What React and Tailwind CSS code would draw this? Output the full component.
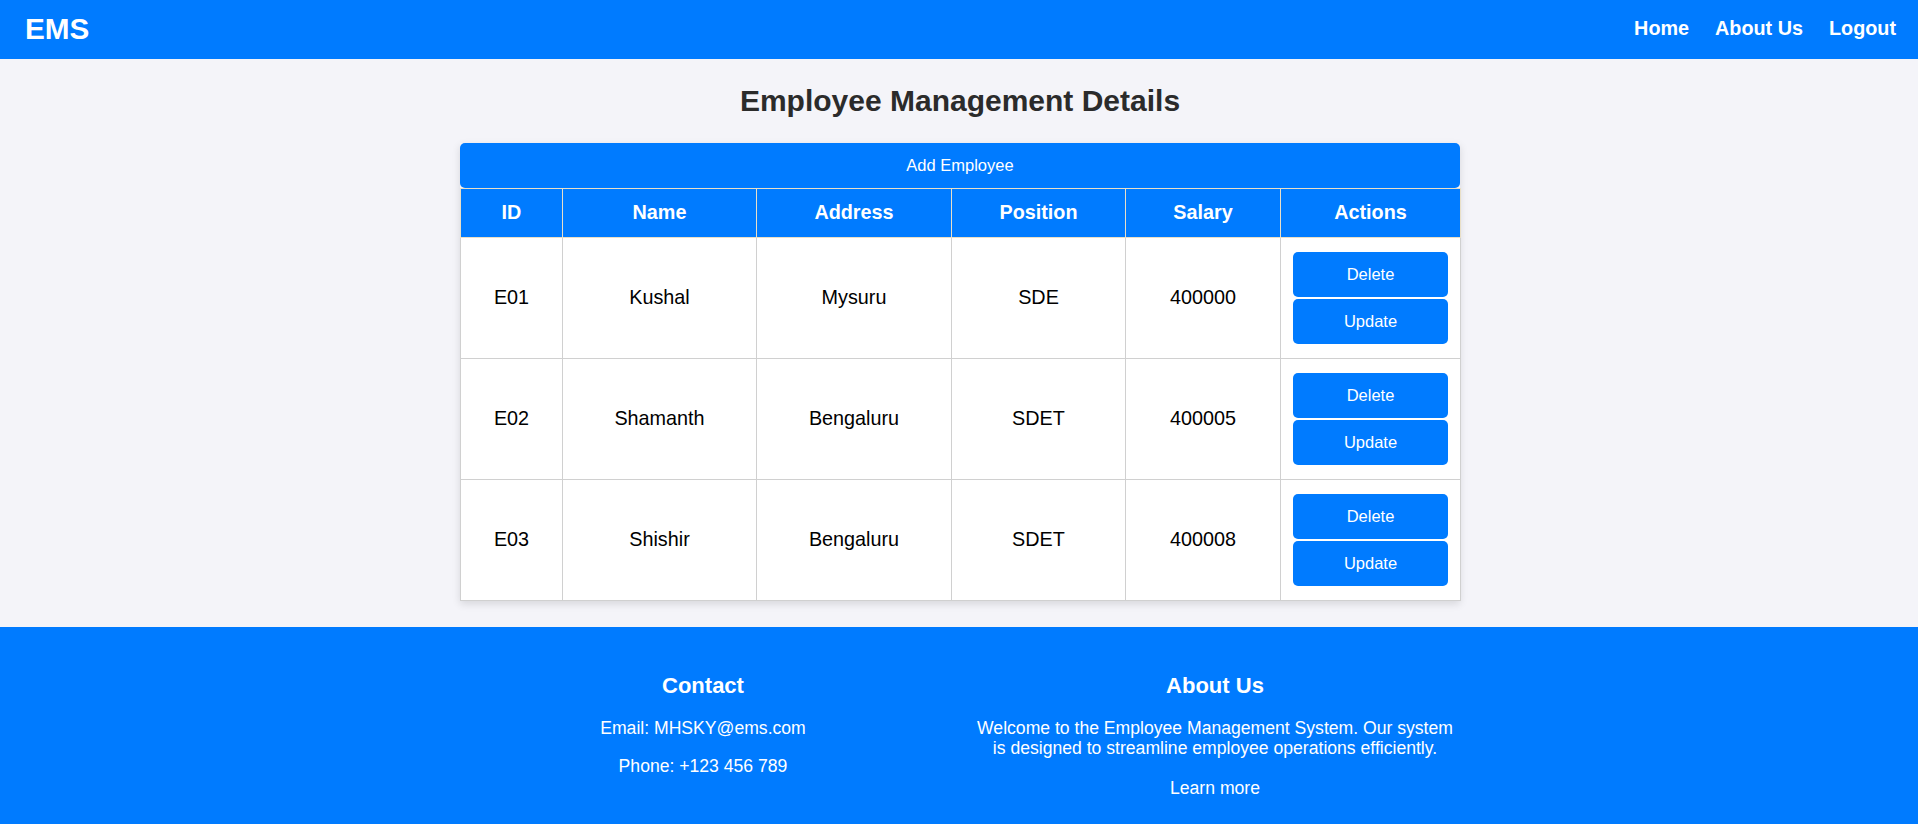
import React, { useState } from "react";

const initialEmployees = [
  { id: "E01", name: "Kushal", address: "Mysuru", position: "SDE", salary: "400000" },
  { id: "E02", name: "Shamanth", address: "Bengaluru", position: "SDET", salary: "400005" },
  { id: "E03", name: "Shishir", address: "Bengaluru", position: "SDET", salary: "400008" },
];

const columns = [
  { label: "ID", width: "w-[102px]" },
  { label: "Name", width: "w-[194px]" },
  { label: "Address", width: "w-[195px]" },
  { label: "Position", width: "w-[174px]" },
  { label: "Salary", width: "w-[155px]" },
  { label: "Actions", width: "w-[180px]" },
];

export default function App() {
  const [employees, setEmployees] = useState(initialEmployees);

  const handleDelete = (id) => {
    setEmployees(employees.filter((e) => e.id !== id));
  };

  return (
    <div className="min-h-screen flex flex-col bg-[#f4f4f9] font-['Liberation_Sans',Arial,sans-serif]">
      {/* Navbar */}
      <nav className="h-[59px] bg-[#007bff] flex items-center justify-between pl-[25px] pr-[22px] pb-[2px]">
        <div className="text-white font-bold text-[29.7px] leading-none">EMS</div>
        <div className="flex items-center gap-[26px] text-white font-bold text-[19.8px] leading-none">
          <a href="#">Home</a>
          <a href="#">About Us</a>
          <a href="#">Logout</a>
        </div>
      </nav>

      {/* Main */}
      <main className="flex-1 flex flex-col items-center pl-[2px]">
        <h2 className="text-[30px] font-bold text-[#2b2b2b] leading-[34px] mt-[25px] mb-[25px] text-center">
          Employee Management Details
        </h2>

        <div className="w-[1000px] mb-[26px] shadow-[0_3px_8px_rgba(0,0,0,0.12)]">
          <button className="w-full h-[45px] bg-[#007bff] text-white text-[16.5px] rounded-[5px]">
            Add Employee
          </button>
          <table className="w-full table-fixed border-collapse bg-white">
            <thead>
              <tr>
                {columns.map((col) => (
                  <th
                    key={col.label}
                    className={`${col.width} h-[49px] bg-[#007bff] text-white text-[19.8px] font-bold border border-[#e9dfc7] text-center`}
                  >
                    {col.label}
                  </th>
                ))}
              </tr>
            </thead>
            <tbody>
              {employees.map((emp) => (
                <tr key={emp.id}>
                  <td className="h-[121px] border border-[#d0d0d0] text-center text-[19.8px] text-black">{emp.id}</td>
                  <td className="border border-[#d0d0d0] text-center text-[19.8px] text-black">{emp.name}</td>
                  <td className="border border-[#d0d0d0] text-center text-[19.8px] text-black">{emp.address}</td>
                  <td className="border border-[#d0d0d0] text-center text-[19.8px] text-black">{emp.position}</td>
                  <td className="border border-[#d0d0d0] text-center text-[19.8px] text-black">{emp.salary}</td>
                  <td className="border border-[#d0d0d0] px-[12px]">
                    <div className="flex flex-col gap-[2px]">
                      <button
                        onClick={() => handleDelete(emp.id)}
                        className="h-[45px] w-full bg-[#007bff] text-white text-[16.5px] rounded-[5px]"
                      >
                        Delete
                      </button>
                      <button className="h-[45px] w-full bg-[#007bff] text-white text-[16.5px] rounded-[5px]">
                        Update
                      </button>
                    </div>
                  </td>
                </tr>
              ))}
            </tbody>
          </table>
        </div>
      </main>

      {/* Footer */}
      <footer className="h-[198px] bg-[#007bff] text-white pt-[46px]">
        <div className="flex justify-center gap-[32px]">
          <div className="w-[480px] text-center">
            <h3 className="text-[22px] font-bold leading-[25px]">Contact</h3>
            <p className="text-[17.6px] leading-[20.2px] mt-[20px]">Email: MHSKY@ems.com</p>
            <p className="text-[17.6px] leading-[20.2px] mt-[17.6px]">Phone: +123 456 789</p>
          </div>
          <div className="w-[480px] text-center">
            <h3 className="text-[22px] font-bold leading-[25px]">About Us</h3>
            <p className="text-[17.6px] leading-[20.2px] mt-[20px]">
              Welcome to the Employee Management System. Our system is designed to streamline employee
              operations efficiently.
            </p>
            <p className="text-[17.6px] leading-[20.2px] mt-[20px]">
              <a href="#">Learn more</a>
            </p>
          </div>
        </div>
      </footer>
    </div>
  );
}
